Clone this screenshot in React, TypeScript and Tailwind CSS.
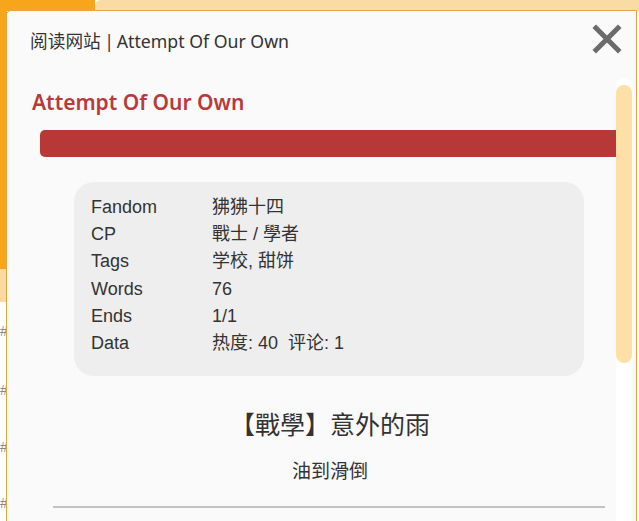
import React from "react";

const rows: [string, string][] = [
  ["Fandom", "狒狒十四"],
  ["CP", "戰士 / 學者"],
  ["Tags", "学校, 甜饼"],
  ["Words", "76"],
  ["Ends", "1/1"],
  ["Data", "热度: 40\u00a0\u00a0评论: 1"],
];

export default function App() {
  return (
    <div className="relative w-[639px] h-[521px] overflow-hidden bg-white">
      {/* background page */}
      <div className="flex flex-col h-full">
        <div className="flex h-[11px]">
          <div className="w-[95px] bg-[#f6a51c]" />
          <div className="flex-1 bg-[#f9dba4] rounded-tl-[6px]" />
        </div>
        <div className="flex flex-1">
          <div className="w-[7px] flex flex-col">
            <div className="h-[258px] bg-[#f6a51c]" />
            <div className="h-[33px] bg-[#fbd9a0]" />
            <div
              className="flex-1 bg-white text-[#888] text-[14px] leading-none"
              style={{ fontFamily: '"Liberation Sans", sans-serif' }}
            >
              <div className="mt-[22px]">#</div>
              <div className="mt-[45px]">#</div>
              <div className="mt-[43px]">#</div>
              <div className="mt-[42px]">#</div>
            </div>
          </div>
        </div>
      </div>

      {/* modal */}
      <div
        className="absolute left-[6px] top-[10px] w-[631px] h-[515px] bg-[#fafafa] border border-[#e7a43f] rounded-tl-[5px] flex flex-col"
        style={{ fontFamily: '"Noto Sans", "Noto Sans CJK SC", sans-serif' }}
      >
        <div className="h-[61px] flex items-center justify-between pl-[23px] pr-[14px]">
          <div className="text-[17.7px] text-[#333]">
            阅读网站<span className="tracking-[-1px]"> | </span>Attempt Of Our Own
          </div>
          <svg width="30" height="30" viewBox="0 0 30 30" className="mt-[-6px]">
            <path d="M4 4 L26 26 M26 4 L4 26" stroke="#6b6b6b" strokeWidth="5" strokeLinecap="square" />
          </svg>
        </div>
        <div className="flex flex-1 min-h-0">
          <div className="flex-1 flex flex-col">
            <div className="pl-[25px] mt-[16px] text-[21px] leading-[28px] font-semibold text-[#b83a3a]">
              Attempt Of Our Own
            </div>
            <div className="ml-[33px] mt-[14px] h-[27px] bg-[#b83838] rounded-l-[5px]" />
            <div
              className="ml-[67px] mr-[32px] mt-[25px] bg-[#eeeeee] rounded-[20px] pl-[17px] pt-[12px] pb-[19px] text-[18px] leading-[27.2px] text-[#333]"
              style={{ fontFamily: '"Liberation Sans", "Noto Sans CJK SC", sans-serif' }}
            >
              {rows.map(([k, v]) => (
                <div key={k} className="flex">
                  <div className="w-[121px]">{k}</div>
                  <div>{v}</div>
                </div>
              ))}
            </div>
            <div
              className="pl-[37px] text-center text-[#333]"
              style={{ fontFamily: '"Noto Sans CJK TC", "Noto Sans CJK SC", sans-serif' }}
            >
              <div className="mt-[31px] text-[25px] leading-[32px]">【戰學】意外的雨</div>
              <div className="mt-[18px] text-[19px] leading-[26px]">油到滑倒</div>
            </div>
            <div className="ml-[46px] mr-[11px] mt-[23px] h-[2px] bg-[#c2c2c2]" />
          </div>
          <div className="w-[16px] mt-[6px] bg-white rounded-t-full pt-[7px]">
            <div className="h-[278px] bg-[#fde0a6] rounded-full" />
          </div>
          <div className="w-[4px]" />
        </div>
      </div>
    </div>
  );
}
